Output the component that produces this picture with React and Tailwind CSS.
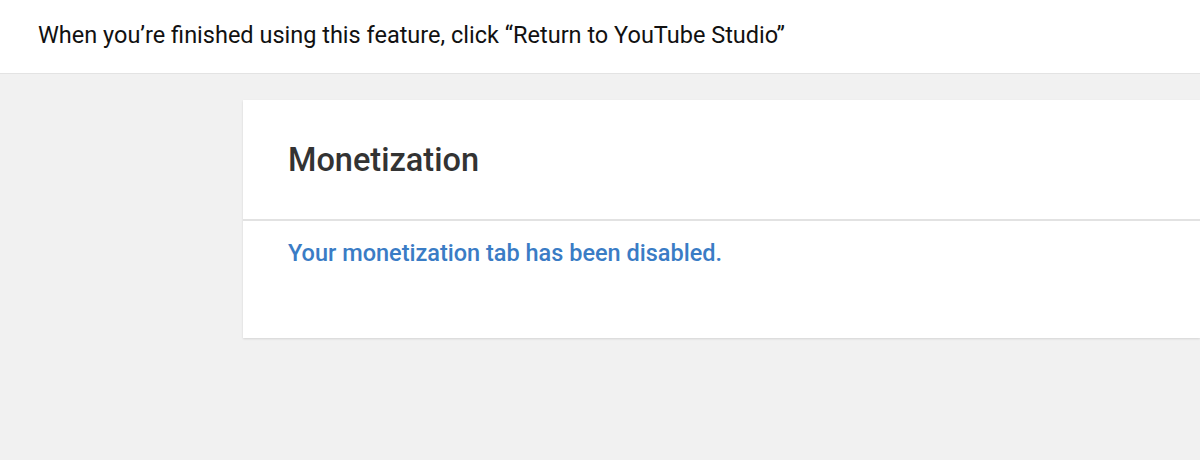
export default function App() {
  return (
    <div className="w-[1200px] h-[460px] bg-[#f1f1f1] overflow-hidden" style={{ fontFamily: "Roboto, 'Liberation Sans', sans-serif" }}>
      <div className="h-[74px] bg-white border-b border-[#e3e3e3] flex items-center pl-[38px]">
        <span className="text-[23.5px] text-[#111] leading-none pb-[2px]">When you’re finished using this feature, click “Return to YouTube Studio”</span>
      </div>
      <div className="pl-[243px] pt-[26px]">
        <div className="bg-white h-[238px] shadow-[0_1px_2px_rgba(0,0,0,0.12)]">
          <div className="h-[121px] flex items-center pl-[45px] border-b-2 border-[#e2e2e2]">
            <h1 className="text-[32.5px] font-medium text-[#333] leading-none pt-[1px]">Monetization</h1>
          </div>
          <div className="pl-[45px] pt-[21px]">
            <p className="text-[23.5px] font-medium text-[#3a7cc5] leading-none">Your monetization tab has been disabled.</p>
          </div>
        </div>
      </div>
    </div>
  );
}
